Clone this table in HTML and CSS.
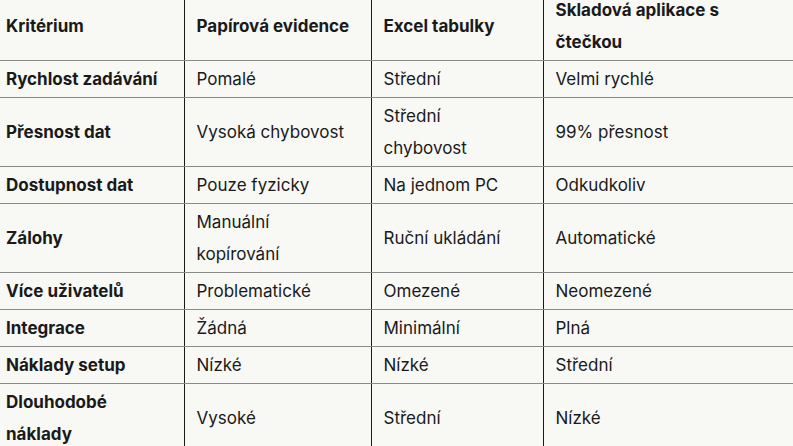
FILE: index.html
```html
<!DOCTYPE html>
<html lang="cs">
<head>
<meta charset="utf-8">
<link rel="stylesheet" href="styles.css">
</head>
<body>
<table class="cmp">
  <colgroup>
    <col class="c1"><col class="c2"><col class="c3"><col class="c4">
  </colgroup>
  <thead>
    <tr><th>Kritérium</th><th>Papírová evidence</th><th>Excel tabulky</th><th>Skladová aplikace s čtečkou</th></tr>
  </thead>
  <tbody>
    <tr><th>Rychlost zadávání</th><td>Pomalé</td><td>Střední</td><td>Velmi rychlé</td></tr>
    <tr><th>Přesnost dat</th><td>Vysoká chybovost</td><td>Střední chybovost</td><td>99% přesnost</td></tr>
    <tr><th>Dostupnost dat</th><td>Pouze fyzicky</td><td>Na jednom PC</td><td>Odkudkoliv</td></tr>
    <tr><th>Zálohy</th><td>Manuální kopírování</td><td>Ruční ukládání</td><td>Automatické</td></tr>
    <tr><th>Více uživatelů</th><td>Problematické</td><td>Omezené</td><td>Neomezené</td></tr>
    <tr><th>Integrace</th><td>Žádná</td><td>Minimální</td><td>Plná</td></tr>
    <tr><th>Náklady setup</th><td>Nízké</td><td>Nízké</td><td>Střední</td></tr>
    <tr><th>Dlouhodobé náklady</th><td>Vysoké</td><td>Střední</td><td>Nízké</td></tr>
  </tbody>
</table>
</body>
</html>
```

FILE: styles.css
```css
html, body {
  margin: 0;
  padding: 0;
  background: #f8f8f5;
  overflow: hidden;
}
body {
  font-family: Inter, "Noto Sans", sans-serif;
  color: #1a1a1a;
  font-size: 17px;
}
.cmp {
  border-collapse: collapse;
  table-layout: fixed;
  width: 799px;
  margin: -8px 0 0 -6px;
}
.c1 { width: 190px; }
.c2 { width: 187px; }
.c3 { width: 172px; }
.c4 { width: 250px; }
.cmp th, .cmp td {
  text-align: left;
  vertical-align: middle;
  line-height: 32px;
  padding: 2px 18px 2px 12px;
  border-bottom: 1px solid #8a8a8a;
  border-left: 1px solid #1a1a1a;
}
.cmp tr > :first-child { border-left: none; }
.cmp th { font-weight: 700; }
.cmp td { font-weight: 400; }
```
